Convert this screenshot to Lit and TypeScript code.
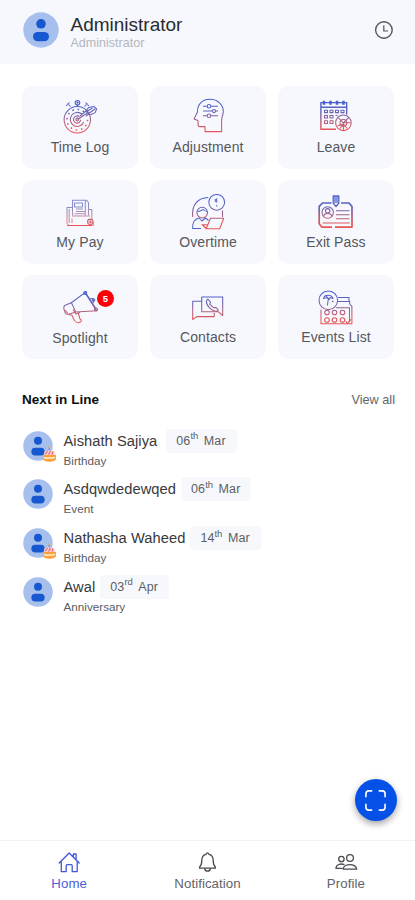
import { LitElement, html, css, svg, nothing } from "lit";
import { customElement, property } from "lit/decorators.js";

const glyphs: Record<string, unknown> = {
  time: svg`
    <circle cx="17.3" cy="23.7" r="13.2"/>
    <circle cx="17.3" cy="23.7" r="10.3" stroke-dasharray="1.6 3.79" stroke-width="1.5"/>
    <path d="M22 18.2a7 7 0 1 0 1.7 8M19.5 20.8a3.6 3.6 0 1 0 1.2 3"/>
    <circle cx="17.3" cy="23.5" r="1.4"/>
    <path d="M17.5 8.5v2M7.500 7.500l3 3M27.500 7.500l-3 3M6 10l3.500-3.500M25.500 6.500L29 10"/>
    <circle cx="17.500" cy="6.700" r="2.300"/><circle cx="17.500" cy="6.700" r=".6"/>
    <path d="M17.500 23.500L28 16.500M20 20l7-6M26.500 14.500l2-3 5.500-.9 2.600 2.400-1.400 3.600-4.600 2.200-3.500-.5-.6-4.300M28 18l7-5M27.500 15l5-3"/>`,
  adjustment: svg`
    <path d="M9.500 15C9.500 8 14.500 3.300 22 3.300s13.300 5.200 13.300 12.200c0 3.500-1.700 5-1.700 9v11.100H17v-5h-5.500c-1.500 0-1.500-1.500-1.500-6.100l-4-1.600L9.500 16z"/>
    <path d="M15 10.200h4m4 0h7M15 15h9m4 0h2M15 19.700h4m4 0h7" />
    <circle cx="21" cy="10.200" r="1.800"/><circle cx="26" cy="15" r="1.600"/><circle cx="21" cy="19.700" r="1.800"/>`,
  leave: svg`
    <path d="M20 33.300H4.900V6.600h25.800v12M4.900 11.300h25.800" stroke-width="1.400"/>
    <path d="M8 4.800v4M14.500 4.800v4M21 4.800v4M27.500 4.800v4" stroke-width="2.500"/>
    <path d="M8.500 14.200h3v2.400h-3zM14 14.200h3v2.400h-3zM19.500 14.200h3v2.400h-3zM25 14.200h3v2.400h-3zM8.500 19.500h3v2.400h-3zM14 19.500h3v2.400h-3zM8.500 24.800h3v2.600h-3zM14 24.800h3v2.600h-3zM19.500 19.500h2"/>
    <circle cx="27.400" cy="26.800" r="7.800"/>
    <path d="M27.400 26.800l5.500-5.500M27.400 26.800L22 21.500M27.400 26.800v7.500M27.400 26.800h7M21.500 30l5-2M24 32.500l3-4M31 32.500l-3-4"/>
    <circle cx="27.400" cy="26.800" r="3.400"/>`,
  pay: svg`
    <g opacity=".7">
    <path d="M12.500 24.500V9.200h14l2 2.300v13M14.500 12h8v4h-8zM16 18h7M16 20.500h9M14.500 22.700h11M25.300 9.500v15"/>
    <path d="M12 16.500H7v16l2 2h24.300v-3.800M9.200 18v14M28.300 18.500h3.500v9M12 25h18M12 27.500v4.500"/></g>
    <circle cx="30.300" cy="30.800" r="2.700"/><path d="M28.800 31h3M30.300 29.300v3M7 34.500h25"/>`,
  overtime: svg`
    <path d="M4.700 26C3.500 13.500 10 6.800 20.300 6.500M34.500 19.500v6.500"/>
    <circle cx="28.700" cy="11.300" r="7.900"/><path d="M28.700 7.300v4.200M28.700 14v1.500M27.300 8v3"/>
    <circle cx="14.200" cy="21.600" r="5.300"/><path d="M9.500 20.500c3 0 4.500-2 6-2 1.500 1.500 2.500 2 3.900 2M4.500 37.500c0-6 2-9.500 6.500-10.500l3 3 3.500-3 3 2.500M4.500 37.500H13" stroke="#5065cb"/>
    <path d="M22.500 27.200h13.200l-4 10.500H18.200zM18.200 37.700l-4.200-4h5.500M15 34l3 3"/>`,
  exit: svg`
    <path d="M15.500 12H6.500l-3.300 3.300v17.500l2.500 3.300H16M19 36.100h17V15.500L33 12h-8" stroke-width="1.700"/>
    <path d="M17.200 4.800h5.600V12L20 15.500 17.200 12zM19 5v7M21 5v7" stroke-width="1.300"/>
    <circle cx="11.700" cy="21.500" r="5.700"/><circle cx="11.700" cy="19.800" r="2.200"/><path d="M7.500 25.500c.5-4 7.900-4 8.400 0"/>
    <path d="M20 19.800h13.500M20 23.700h13.500M20 27.700h13.500M6.700 32h27" />`,
  spotlight: svg`
    <path d="M11.700 16.500L25 6.700l11.500 18-20.800 1.200-4.400-9.400zM11.700 16.500l-7 3c-2 1.500 0 9 3.300 9l7.700-2.600M23.500 8l2.800-2.700M26.500 8l10 15.500M30 13c3-1.500 5 1.500 3 4"/>
    <path d="M9 28.500l3 .8c2 6 4 7.500 6.500 7.500 3.500-.8 3.600-2.800 1.500-3.800l-2-6.500M13 23.500l3 4.500 4-1.500M5 24l3 3.500"/>
    <circle cx="25.200" cy="6.900" r="1.500"/><circle cx="36" cy="23.500" r="1.500"/><circle cx="33.500" cy="14" r="1.300"/>`,
  contacts: svg`
    <path d="M13.700 25.700V11h21v18.500l-4.500-3.800z"/>
    <path d="M13.700 15.300h-9v18.200l4-2.900h17.600v-3.500"/>
    <path d="M19.800 13l2.700 3.200-.8 2 3.800 3.500 2.200-.3 2.600 2.500-1.700 1.600c-5-.2-10.500-5.700-10.200-10.500z"/>`,
  events: svg`
    <path d="M5 23.500v14.300h26M21.500 15.500h12.200v2.500l2.200 2.300v17.500H31l-1-2.500M20 21.700h13.500v14.500M22 11.500h11v4"/>
    <circle cx="12.300" cy="14.300" r="9.300"/>
    <path d="M7.500 12.500c1-4 8-4.500 9.500 0l-3-1-1.500 2-1.500-2zM12.300 13.500l-1 6M16 15l1.500 1M9 9l5 5"/>
    <circle cx="11" cy="26.500" r="2.300"/><circle cx="18.500" cy="26.500" r="2.300"/><circle cx="26.500" cy="26.500" r="2.300"/>
    <circle cx="11" cy="34" r="2.300"/><circle cx="18.500" cy="34" r="2.300"/><circle cx="26.500" cy="34" r="2.300"/>
    <path d="M31 37.800l4-4.500"/>`,
};

@customElement("user-avatar")
class UserAvatar extends LitElement {
  static styles = css`
    :host { display: block; }
    .face { display: block; width: 100%; height: 100%; }
  `;
  render() {
    return html`<svg class="face" viewBox="0 0 36 36">
      <circle cx="18" cy="18" r="17.700" fill="#a6bfed"/>
      <circle cx="18" cy="11.800" r="4.800" fill="#1558cf"/>
      <rect x="10" y="20" width="16" height="9.300" rx="4.650" fill="#1558cf"/>
    </svg>`;
  }
}

@customElement("menu-tile")
class MenuTile extends LitElement {
  @property() icon = "";
  @property() label = "";
  @property({ type: Number }) count = 0;
  static styles = css`
    :host {
      display: flex; flex-direction: column; align-items: center;
      box-sizing: border-box; height: 83.500px; padding-top: 10.500px;
      border-radius: 11px; background: #f6f8fe;
    }
    .picture { position: relative; width: 40px; height: 40px; }
    .glyph { display: block; width: 40px; height: 40px; overflow: visible; }
    .label { font-size: 14px; line-height: 22px; letter-spacing: .1px; color: #55575b; white-space: nowrap; }
    .badge {
      position: absolute; left: 37px; top: 4px; width: 17px; height: 17px;
      border-radius: 50%; background: #fb0007; color: #fff;
      font-size: 9.500px; font-weight: bold; line-height: 17px; text-align: center;
    }
    .low { padding-top: 1px; }
  `;
  render() {
    return html`
      <div class="picture">
        <svg class="glyph" viewBox="0 0 40 40" fill="none" stroke="url(#ink)" stroke-width="1.050" stroke-linejoin="round">
          <defs><linearGradient id="ink" gradientUnits="userSpaceOnUse" x1="0" y1="4" x2="0" y2="37">
            <stop offset=".1" stop-color="#4a60d2"/><stop offset=".4" stop-color="#6b63ae"/>
            <stop offset=".65" stop-color="#b0607f"/><stop offset=".9" stop-color="#e75558"/>
          </linearGradient></defs>
          ${glyphs[this.icon]}
        </svg>
        ${this.count ? html`<span class="badge">${this.count}</span>` : nothing}
      </div>
      <span class="label ${this.count ? "low" : ""}">${this.label}</span>`;
  }
}

interface Upcoming { name: string; day: string; suffix: string; month: string; kind: string; cake?: boolean; gap: number; }

const upcoming: Upcoming[] = [
  { name: "Aishath Sajiya", day: "06", suffix: "th", month: "Mar", kind: "Birthday", cake: true, gap: 9 },
  { name: "Asdqwdedewqed", day: "06", suffix: "th", month: "Mar", kind: "Event", gap: 5 },
  { name: "Nathasha Waheed", day: "14", suffix: "th", month: "Mar", kind: "Birthday", cake: true, gap: 5 },
  { name: "Awal", day: "03", suffix: "rd", month: "Apr", kind: "Anniversary", gap: 5 },
];

const tiles: [string, string, number][] = [
  ["time", "Time Log", 0], ["adjustment", "Adjustment", 0], ["leave", "Leave", 0],
  ["pay", "My Pay", 0], ["overtime", "Overtime", 0], ["exit", "Exit Pass", 0],
  ["spotlight", "Spotlight", 5], ["contacts", "Contacts", 0], ["events", "Events List", 0],
];

@customElement("app-root")
class AppRoot extends LitElement {
  static styles = css`
    :host {
      display: flex; flex-direction: column; position: relative;
      box-sizing: border-box; width: 100%; height: 900px; overflow: hidden;
      background: #fff; font-family: "Liberation Sans", Arial, sans-serif; color: #303136;
    }
    .header {
      display: flex; align-items: center; box-sizing: border-box; height: 64px;
      padding: 0 21px 4px 22.500px; background: #f6f8fe;
    }
    .me { width: 36px; height: 36px; }
    .who { flex: 1; margin-left: 12px; padding-top: 4px; }
    .title { font-size: 19px; line-height: 22px; color: #2a2b2f; }
    .role { font-size: 12.500px; line-height: 15px; letter-spacing: .02px; color: #b4b6bb; }
    .clock { width: 20px; height: 20px; }
    .grid { display: grid; grid-template-columns: repeat(3, 1fr); gap: 11.400px 12px; padding: 21.500px 21px 0 22px; }
    .section { display: flex; justify-content: space-between; align-items: center; padding: 0 20px 0 22px; margin-top: 30px; height: 22px; }
    .heading { font-size: 13.500px; font-weight: bold; letter-spacing: .05px; color: #0d0e10; }
    .all { font-size: 12.700px; color: #63656a; }
    .list { margin-top: 18px; }
    .row { display: flex; height: 48.700px; padding-left: 22.500px; }
    .portrait { position: relative; width: 30px; height: 30px; margin-top: 2px; }
    .small { width: 30px; height: 30px; }
    .cake { position: absolute; left: 19.500px; top: 15px; width: 15px; height: 17px; }
    .info { margin-left: 11px; }
    .line { display: flex; align-items: center; height: 24px; }
    .name { font-size: 14.700px; letter-spacing: .05px; white-space: nowrap; color: #37383c; }
    .chip {
      display: flex; align-items: center; box-sizing: border-box; height: 24px; padding: 0 11px 0 10px;
      border-radius: 4px; background: #f6f8fc; color: #5c5f64; font-size: 12.500px; letter-spacing: .1px; white-space: nowrap;
    }
    .suffix { font-size: 9.500px; line-height: 10px; margin: -9px 5.500px 0 0; letter-spacing: 0; }
    .kind { font-size: 11.700px; line-height: 14px; color: #5a5c61; margin-top: 1px; }
    .scan {
      position: absolute; right: 18.500px; bottom: 79px; width: 42px; height: 42px; border-radius: 50%;
      display: grid; place-items: center; background: #0550e6; box-shadow: 0 3px 7px rgba(0, 0, 0, .36);
    }
    .frame { width: 23px; height: 23px; }
    .nav { display: grid; grid-template-columns: repeat(3, 1fr); box-sizing: border-box; height: 60px; margin-top: auto; border-top: 1.500px solid #f3f3f4; }
    .tab { display: flex; flex-direction: column; align-items: center; padding-top: 10px; color: #636468; font-size: 13.300px; line-height: 18px; letter-spacing: .05px; }
    .active { color: #4d60de; }
    .tabicon { width: 24px; height: 24px; overflow: visible; }
  `;

  private cake() {
    return html`<svg class="cake" viewBox="0 0 15 17">
      <path d="M7.200 1v4" stroke="#5a8bd8" stroke-width="1"/><circle cx="7.200" cy="1.500" r="1" fill="#ffa83a"/>
      <path d="M2.200 6.500c0-3 10.300-3 10.300 0v4H2.200z" fill="#f9cfd0"/>
      <path d="M3.500 8l2-3M6.500 8.500l2-3.500M10 8.500l1-3" stroke="#eb6570" stroke-width="1.200"/>
      <path d="M1 9.500c0-1.500 1.500-.5 6.300-.5S14 8 14 9.500v3.200c0 4-13 4-13 0z" fill="#fba23f"/>
      <path d="M2 11.200c2 2 3 .5 5 .9 2-.4 4 .8 6-.9" fill="none" stroke="#fff0cc" stroke-width="1.500"/>
    </svg>`;
  }

  render() {
    return html`
      <header class="header">
        <user-avatar class="me"></user-avatar>
        <div class="who"><div class="title">Administrator</div><div class="role">Administrator</div></div>
        <svg class="clock" viewBox="0 0 20 20" fill="none" stroke="#55565a" stroke-width="1.400">
          <circle cx="9.900" cy="10" r="8.300"/><path d="M9.800 5.200v5.800h4.200" stroke-width="1.200"/>
        </svg>
      </header>
      <main class="grid">
        ${tiles.map(([icon, label, count]) => html`<menu-tile .icon=${icon} .label=${label} .count=${count}></menu-tile>`)}
      </main>
      <div class="section"><span class="heading">Next in Line</span><span class="all">View all</span></div>
      <div class="list">
        ${upcoming.map((u) => html`
          <div class="row">
            <div class="portrait"><user-avatar class="small"></user-avatar>${u.cake ? this.cake() : nothing}</div>
            <div class="info">
              <div class="line" style="gap:${u.gap}px">
                <span class="name">${u.name}</span>
                <span class="chip">${u.day}<span class="suffix">${u.suffix}</span>${u.month}</span>
              </div>
              <div class="kind">${u.kind}</div>
            </div>
          </div>`)}
      </div>
      <div class="scan">
        <svg class="frame" viewBox="0 0 24 24" fill="none" stroke="#fff" stroke-width="1.700" stroke-linecap="round">
          <path d="M2 8V5q0-3 3-3h3M16 2h3q3 0 3 3v3M22 16v3q0 3-3 3h-3M8 22H5q-3 0-3-3v-3"/>
        </svg>
      </div>
      <nav class="nav">
        <div class="tab active">
          <svg class="tabicon" viewBox="0 0 24 24" fill="none" stroke="#4156dc" stroke-width="1.300" stroke-linejoin="round" stroke-linecap="round">
            <path d="M2.200 12L12.200 2l10 10M4.300 10.500v10.200h4.900v-6q0-1 1-1h4q1 0 1 1v6h5V10.500M16.400 5.500V3h2.700v5.300"/>
          </svg>Home
        </div>
        <div class="tab">
          <svg class="tabicon" viewBox="0 0 24 24" fill="none" stroke="#4a4b4f" stroke-width="1.300" stroke-linejoin="round">
            <path d="M10.900 3.400q1.600-3 3.200 0c3 .8 4.100 3.200 4.100 6 0 3.800.9 5.400 2.200 6.500v1.300H4.600v-1.300c1.300-1.100 2.200-2.700 2.200-6.500 0-2.800 1.100-5.200 4.100-6z"/>
            <path d="M9.700 17.400c.2 3.700 5.500 3.700 5.700 0"/>
          </svg>Notification
        </div>
        <div class="tab">
          <svg class="tabicon" viewBox="0 0 24 24" fill="none" stroke="#4a4b4f" stroke-width="1.300" stroke-linejoin="round">
            <circle cx="16" cy="7" r="3.400"/><circle cx="7.400" cy="8" r="2.700"/>
            <path d="M9.200 18.200c0-6 13.500-6 13.500 0zM10.500 13.700c-4-1.600-8.500-.2-8.500 3.700h6.500"/>
          </svg>Profile
        </div>
      </nav>`;
  }
}
